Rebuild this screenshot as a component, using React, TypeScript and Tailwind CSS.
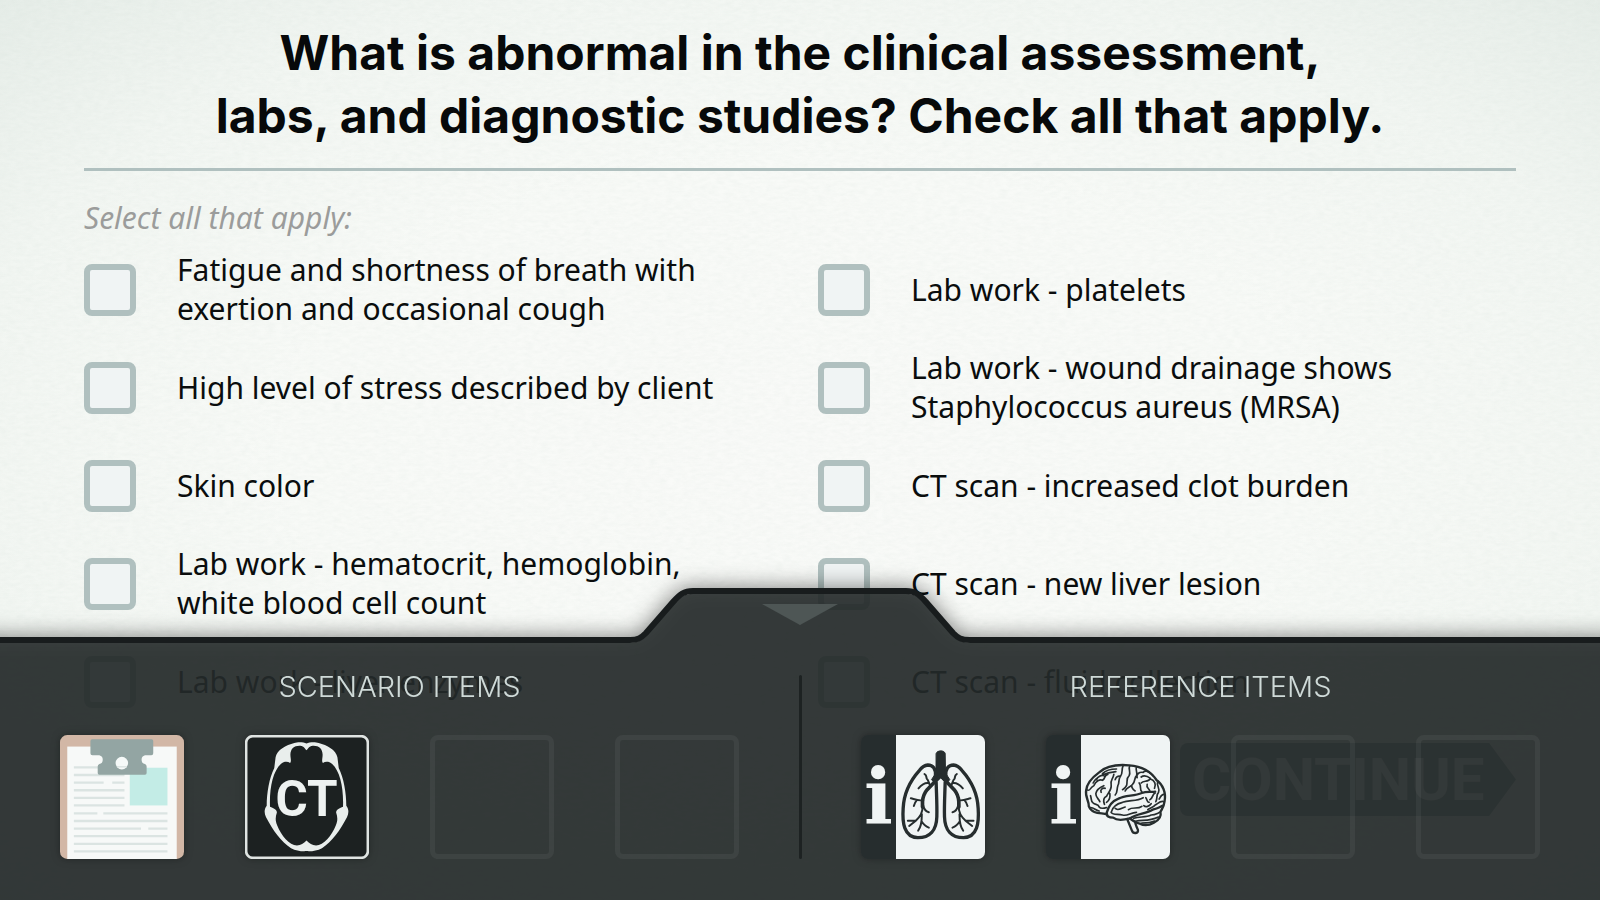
import { useState } from "react";
import type { ReactNode } from "react";

const findings = [
  "Fatigue and shortness of breath with exertion and occasional cough",
  "High level of stress described by client",
  "Skin color",
  "Lab work - hematocrit, hemoglobin, white blood cell count",
  "Lab work - liver enzymes",
  "Lab work - platelets",
  "Lab work - wound drainage shows Staphylococcus aureus (MRSA)",
  "CT scan - increased clot burden",
  "CT scan - new liver lesion",
  "CT scan - fluid collection",
];

function PaperGrain() {
  return (
    <svg className="pointer-events-none absolute inset-0 size-full opacity-10" aria-hidden="true">
      <filter id="grain">
        <feTurbulence type="fractalNoise" baseFrequency="0.12 0.3" numOctaves="4" seed="4" />
        <feColorMatrix values="0 0 0 0 0.45  0 0 0 0 0.55  0 0 0 0 0.5  0.9 0.9 0 0 -0.6" />
      </filter>
      <rect width="100%" height="100%" filter="url(#grain)" />
    </svg>
  );
}

function Finding({ label }: { label: string }) {
  const [checked, setChecked] = useState(false);
  return (
    <label className="flex min-h-[98px] cursor-pointer items-center gap-[41px]">
      <input
        type="checkbox"
        checked={checked}
        onChange={(e) => setChecked(e.target.checked)}
        className="size-[52px] shrink-0 appearance-none rounded-lg border-6 border-[#b0c0bf] bg-[#f0f4f4] checked:bg-[#5f7876]"
      />
      <span className="max-w-[550px] pb-0.5 text-[30px] leading-[39px] text-[#0a0d0d]">{label}</span>
    </label>
  );
}

function ClipboardIcon() {
  return (
    <svg viewBox="0 0 375 375" className="size-full" aria-hidden="true">
      <clipPath id="board">
        <rect width="375" height="375" rx="22" />
      </clipPath>
      <g clipPath="url(#board)">
        <rect width="375" height="375" fill="#d2b7a6" />
        <rect x="22" y="35" width="331" height="340" fill="#f7f9f8" />
        <path
          d="M42 98H195M42 121H195M42 144H132M158 144H195M42 167H195M42 190H195M42 213H195M42 237H113M131 237H325M42 260H325M42 283H245M267 283H325M42 306H325M42 329H325M42 352H325"
          stroke="#dbe4e2"
          strokeWidth="7"
        />
        <rect x="211" y="99" width="114" height="114" fill="#c3ece6" />
        <path
          d="M97 13H277Q282 13 282 18V55Q282 61 276 61H257A14 14 0 0 0 257 88Q262 90 262 95V115Q262 120 257 120H119Q114 120 114 115V95Q114 90 119 88A14 14 0 0 0 119 61H98Q92 61 92 55V18Q92 13 97 13Z"
          fill="#93a5a3"
        />
        <circle cx="187" cy="85" r="19" fill="#f5f9f8" />
        <path d="M172 96H202" stroke="#dbe4e2" strokeWidth="5" />
      </g>
    </svg>
  );
}

function CtIcon() {
  return (
    <svg viewBox="0 0 377 377" className="size-full" aria-hidden="true">
      <rect x="3.5" y="3.5" width="370" height="370" rx="20" fill="#1c2121" stroke="#dfe4e2" strokeWidth="8" />
      <path
        fill="#e9eeec"
        fillRule="evenodd"
        d="M187 26C178 21 160 21 150 24C125 30 97 45 93 68L89 100C74 130 66 175 66 215C58 225 58 238 64 250C85 290 110 325 140 344C155 352 172 354 187 353C202 354 219 352 234 344C264 325 289 290 310 250C316 238 316 225 308 215C308 175 300 130 285 100L281 68C277 45 249 30 224 24C214 21 196 21 187 26Z
        M187 46C183 44 180 34 168 33C150 32 138 42 138 60C138 70 142 80 137 85C130 80 118 80 109 88C85 110 74 160 76 218C85 222 97 226 97 236C92 250 92 262 98 275C110 305 135 336 158 336C170 336 178 330 187 321C196 330 204 336 216 336C239 336 264 305 276 275C282 262 282 250 277 236C277 226 289 222 298 218C300 160 289 110 265 88C256 80 244 80 237 85C232 80 236 70 236 60C236 42 224 32 206 33C194 34 191 44 187 46Z"
      />
      <text
        x="187"
        y="245"
        textAnchor="middle"
        fill="#eef2f1"
        className="font-['Roboto',sans-serif] text-[150px] font-bold"
      >
        CT
      </text>
    </svg>
  );
}

const lungHalf =
  "M117 92C118 72 110 60 94 60C84 61 76 67 69 76C42 106 22 145 20 190C17 232 22 277 64 278C100 278 120 256 121 215C122 180 120 150 119 112";
const bronchi = "M132 92L92 134C82 146 79 156 78 170V186";
const bronchioles =
  "M102 122C96 116 97 106 91 101C88 96 92 92 84 87M97 114C86 112 76 118 66 130M80 165C70 169 58 164 43 160M60 167C56 171 54 176 52 183M79 178C82 192 88 200 97 202M78 184C80 206 68 218 57 228L38 243M57 227L34 227M76 208C76 230 74 246 65 257M75 229C82 240 88 245 97 248";

function LungHalf() {
  return (
    <>
      <path d={lungHalf} strokeWidth="10" />
      <path d={bronchi} strokeWidth="11" />
      <path d={bronchioles} strokeWidth="6" />
    </>
  );
}

function LungsIcon() {
  return (
    <svg viewBox="0 0 264 372" className="h-full min-w-0 flex-1 bg-[#f0f4f4]" fill="none" stroke="#262d2e" strokeLinecap="round" strokeLinejoin="round" aria-hidden="true">
      <g transform="translate(0 30)">
        <path d="M119 25C122 15 143 15 146 25L147 84L160 104L150 114L133 98L115 114L105 104L118 84Z" fill="#262d2e" strokeWidth="3" />
        <LungHalf />
        <g transform="translate(265 0) scale(-1 1)">
          <LungHalf />
        </g>
      </g>
    </svg>
  );
}

function BrainIcon() {
  return (
    <svg viewBox="0 0 264 372" className="h-full min-w-0 flex-1 bg-[#f0f4f4]" fill="none" stroke="#262d2e" strokeLinecap="round" strokeLinejoin="round" aria-hidden="true">
      <g transform="translate(-3 60)">
        <g strokeWidth="7">
          <path d="M80 178C64 172 36 180 25 154C26 138 13 126 17 106C19 84 34 68 56 52C76 34 112 28 146 31C184 34 212 50 228 75C246 88 258 112 252 140C250 158 244 162 240 170C243 184 234 196 220 203C206 211 190 212 178 206C166 204 156 196 148 190C126 196 108 196 98 188C86 188 76 184 79 172C84 154 96 138 114 131C136 120 160 124 184 114C198 108 212 112 224 110" />
          <path d="M140 192L154 226C158 238 176 236 172 224C168 214 164 208 164 200" />
          <path d="M148 190C168 176 198 176 216 164C230 160 238 158 246 152" />
        </g>
        <g strokeWidth="5">
          <path d="M92 172C96 154 110 146 126 142C146 134 168 140 188 128M92 172C98 182 112 176 126 180M104 160C112 170 124 158 134 156M126 180C142 184 150 172 168 172M144 164C156 154 172 164 184 154M190 152C196 158 206 154 212 146" />
          <path d="M18 104C30 112 28 96 40 92C46 78 58 72 66 76C76 70 70 60 82 58M38 84C46 66 76 52 106 50M66 56C78 44 94 42 108 42M48 74C52 62 64 60 70 62" />
          <path d="M128 32C122 44 128 54 120 64C112 74 118 82 112 92C108 104 112 112 104 120M148 32C142 42 152 52 146 62C136 70 142 80 138 92C134 100 130 102 126 104M120 64C112 62 106 66 104 74" />
          <path d="M100 58C98 72 88 76 92 90C94 104 84 112 78 124M70 92C60 96 48 102 46 116C46 128 54 130 58 140M78 124C70 128 68 138 72 148M30 122C34 132 30 140 38 144C44 150 54 146 56 156C60 162 70 160 78 158M62 112C58 104 66 98 74 100M30 158C42 158 44 166 56 168M88 116C90 128 84 138 78 142" />
          <path d="M168 36C164 46 172 52 168 62C160 70 166 78 156 88C150 92 156 104 164 108M170 68C166 58 176 50 188 52C196 44 210 54 218 62M182 66C192 58 202 64 210 70C204 82 190 76 182 84M176 84C184 94 176 104 184 110M200 88C196 98 206 100 208 108M210 72C222 76 228 88 222 100M152 92C146 98 138 98 134 108" />
          <path d="M232 78C226 94 240 98 234 112C226 120 232 130 226 140M250 118C242 118 240 126 236 132M224 114C214 118 218 130 208 134M250 140C240 136 232 146 224 150C220 156 206 160 202 164M196 128C202 136 198 142 206 142" />
          <path d="M160 190C176 184 196 188 212 180C224 180 232 174 238 172M168 198C186 194 204 200 234 186M184 204C198 204 210 204 222 198" />
        </g>
      </g>
    </svg>
  );
}

function InfoCard({ children }: { children: ReactNode }) {
  return (
    <span className="flex size-full overflow-hidden rounded-[7px]">
      <span className="flex w-[35px] shrink-0 items-center justify-center bg-[#262d2e] font-['DejaVu_Serif',serif] text-[76px] leading-none font-bold text-[#f0f4f4]">
        i
      </span>
      {children}
    </span>
  );
}

function Item({ label, children }: { label: string; children: ReactNode }) {
  return (
    <button type="button" aria-label={label} className="size-[124px] shrink-0 rounded-[7px] shadow-[0_0_8px_rgba(0,0,0,0.35)]">
      {children}
    </button>
  );
}

function EmptySlot() {
  return <div className="size-[124px] shrink-0 rounded-lg border-5 border-white/5" />;
}

function ItemGroup({ title, children }: { title: string; children: ReactNode }) {
  return (
    <section className="min-w-0 flex-1 pt-[33px]">
      <h2 className="text-center text-[29px] leading-8 font-light text-[#cfdad8]">{title}</h2>
      <div className="mt-8 flex justify-center gap-[61px]">{children}</div>
    </section>
  );
}

function DrawerBackdrop() {
  return (
    <div className="absolute -inset-x-10 top-0 -bottom-10 flex flex-col drop-shadow-[0_0_11px_rgba(0,0,0,0.55)]" aria-hidden="true">
      <div className="flex h-[55px] items-end">
        <div className="h-[6px] flex-1 bg-[#181c1d]" />
        <svg viewBox="0 0 340 55" className="h-[55px] w-[340px]" fill="none">
          <path d="M0 55C10 54 13 51 17 47L46 14C51 8 55 6 63 6H276C284 6 288 8 293 14L322 47C326 51 330 54 340 55Z" fill="#262c2c" fillOpacity="0.86" />
          <path d="M0 52C8 52 11 50 16 45L43 14C50 6 54 3 63 3H276C285 3 289 6 296 14L323 45C328 50 331 52 340 52" stroke="#181c1d" strokeWidth="6" />
        </svg>
        <div className="h-[6px] flex-1 bg-[#181c1d]" />
      </div>
      <div className="flex-1 bg-[#262c2c]/86" />
    </div>
  );
}

function ItemDrawer() {
  return (
    <aside className="fixed inset-x-0 bottom-0">
      <DrawerBackdrop />
      <div className="relative">
        <div className="flex justify-center">
          <button type="button" aria-label="Close drawer" className="flex h-[50px] w-[220px] justify-center pt-4">
            <svg viewBox="0 0 76 21" className="h-[21px] w-[76px]" aria-hidden="true">
              <path d="M0 0H76L38 21Z" fill="#4e5655" />
            </svg>
          </button>
        </div>
        <div className="flex pb-[41px]">
          <ItemGroup title="SCENARIO ITEMS">
            <Item label="Client chart"><ClipboardIcon /></Item>
            <Item label="CT scan"><CtIcon /></Item>
            <EmptySlot />
            <EmptySlot />
          </ItemGroup>
          <div className="mt-[37px] -mr-px w-[3px] rounded-full bg-[#1d2222]" />
          <ItemGroup title="REFERENCE ITEMS">
            <Item label="Lung reference"><InfoCard><LungsIcon /></InfoCard></Item>
            <Item label="Brain reference"><InfoCard><BrainIcon /></InfoCard></Item>
            <EmptySlot />
            <EmptySlot />
          </ItemGroup>
        </div>
      </div>
    </aside>
  );
}

export default function App() {
  return (
    <div className="relative min-h-screen bg-[radial-gradient(ellipse_at_center,#f9faf8_0%,#f8faf7_45%,#f2f6f2_75%,#e6ede8_100%)] font-['Inter',sans-serif]">
      <PaperGrain />
      <main className="relative px-[84px] pt-[21px] pb-10">
        <h1 className="text-center text-5xl leading-[63px] font-bold text-[#07090a]">
          What is abnormal in the clinical assessment,
          <br />
          labs, and diagnostic studies? Check all that apply.
        </h1>
        <hr className="mt-[21px] h-[3px] border-0 bg-[#b0c0bf]" />
        <form className="font-['Noto_Sans',sans-serif]" onSubmit={(e) => e.preventDefault()}>
          <fieldset>
            <legend className="pt-[27px] text-[30px] leading-10 text-[#9b9c9b] italic">Select all that apply:</legend>
            <div className="mt-[3px] grid grid-flow-col grid-cols-2 grid-rows-5 gap-x-9">
              {findings.map((f) => (
                <Finding key={f} label={f} />
              ))}
            </div>
          </fieldset>
          <div className="mt-3 flex justify-end">
            <button
              type="submit"
              className="h-[73px] w-[336px] rounded-l-lg bg-[#8a9c9a] pl-3 text-left font-['Roboto',sans-serif] text-[60px] leading-[73px] font-bold text-[#f0f4f4] [clip-path:polygon(0_0,92%_0,100%_50%,92%_100%,0_100%)]"
            >
              CONTINUE
            </button>
          </div>
        </form>
      </main>
      <ItemDrawer />
    </div>
  );
}
